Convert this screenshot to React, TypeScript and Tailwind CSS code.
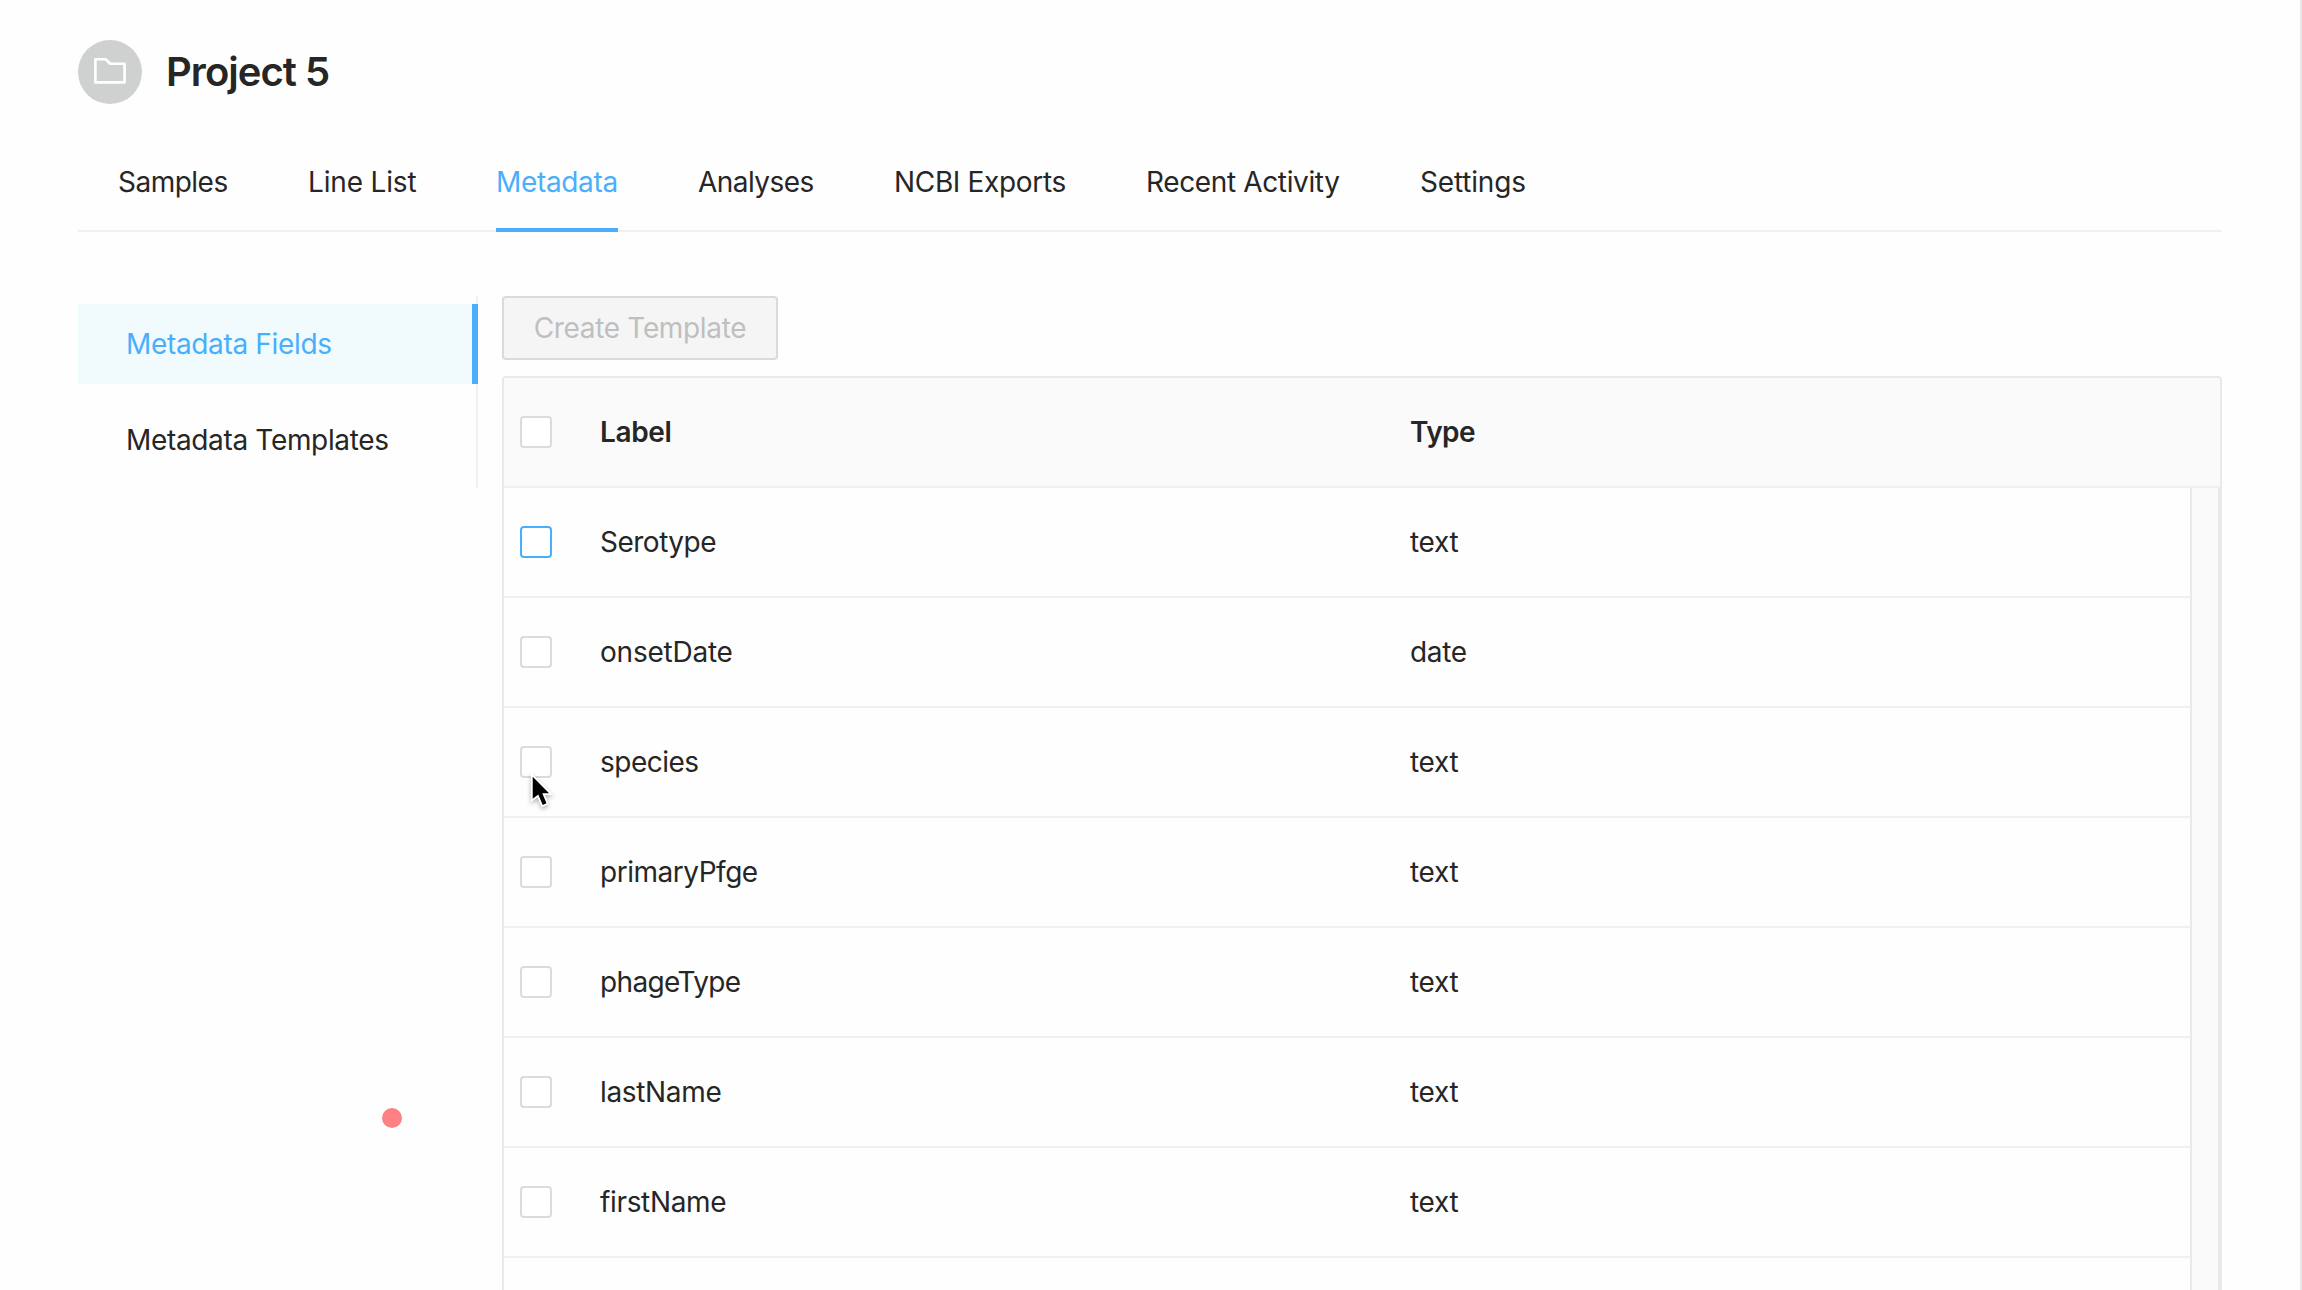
const tabs = [
  { name: "Samples", width: "w-[110px]", tracking: "tracking-[-0.018em]" },
  { name: "Line List", width: "w-[108px]", tracking: "tracking-[-0.006em]" },
  { name: "Metadata", width: "w-[122px]", tracking: "tracking-[-0.012em]", active: true },
  { name: "Analyses", width: "w-[116px]", tracking: "tracking-[-0.02em]" },
  { name: "NCBI Exports", width: "w-[172px]", tracking: "tracking-[-0.012em]" },
  { name: "Recent Activity", width: "w-[194px]", tracking: "tracking-[-0.013em]" },
  { name: "Settings", width: "w-[108px]", tracking: "tracking-[-0.006em]" },
];

const fields = [
  { label: "Serotype", type: "text", tracking: "tracking-[-0.018em]", focused: true },
  { label: "onsetDate", type: "date", tracking: "tracking-[-0.008em]" },
  { label: "species", type: "text", tracking: "tracking-[-0.018em]", pointer: true },
  { label: "primaryPfge", type: "text", tracking: "tracking-[-0.017em]" },
  { label: "phageType", type: "text", tracking: "tracking-[-0.023em]" },
  { label: "lastName", type: "text", tracking: "tracking-[-0.012em]" },
  { label: "firstName", type: "text", tracking: "tracking-[-0.012em]" },
];

function FolderIcon() {
  return (
    <svg className="mb-[3px]" width="32" height="32" viewBox="0 0 32 32" fill="none" stroke="#fff" strokeWidth="2.6" strokeLinejoin="round">
      <path d="M1.4 4.3H11.6l4.6 4.5h14.4v18.6H1.4z" />
    </svg>
  );
}

function Pointer() {
  return (
    <svg className="absolute left-[8px] top-[22px] drop-shadow-[0_2px_2px_rgba(0,0,0,0.3)]" width="24" height="38" viewBox="0 0 24 38">
      <path d="M2.7 6.7V28.7L8.3 24.6l4.4 10.3 3.8-1.6-4.2-10.1h6.8z" fill="#000" stroke="#fff" strokeWidth="3.6" paintOrder="stroke" />
    </svg>
  );
}

function Checkbox({ focused = false, pointer = false }: { focused?: boolean; pointer?: boolean }) {
  return (
    <div className={`relative ml-4 mr-12 size-8 shrink-0 rounded-[4px] border-2 bg-white ${focused ? "border-[#4aaffb]" : "border-[#dbdbdb]"}`}>
      {pointer && <Pointer />}
    </div>
  );
}

export default function App() {
  return (
    <div className="relative flex h-[1290px] w-[2302px] flex-col overflow-hidden border-r-2 border-[#e8e8e8] bg-[#fefefe] pl-[78px] font-['Inter',sans-serif] text-[28px] leading-[44px] tracking-[-0.012em] text-[#262626]">
      <header className="mt-10 flex h-16 shrink-0 items-center gap-6">
        <div className="flex size-16 items-center justify-center rounded-full bg-[#cfd1d1]">
          <FolderIcon />
        </div>
        <h1 className="text-[40px] font-semibold leading-[64px] tracking-[-0.024em]">Project 5</h1>
      </header>

      <nav className="mt-6 flex h-[104px] w-[2144px] shrink-0 gap-20 border-b-2 border-[#f0f0f0] pl-10">
        {tabs.map((t) => (
          <div
            key={t.name}
            className={`-mb-[2px] h-[104px] shrink-0 whitespace-nowrap pt-8 ${t.width} ${t.tracking} ${t.active ? "border-b-4 border-[#4aaffb] text-[#4aaffb]" : ""}`}
          >
            {t.name}
          </div>
        ))}
      </nav>

      <div className="mt-16 flex min-h-0 flex-1 items-start gap-6">
        <aside className="flex h-48 w-[400px] shrink-0 flex-col gap-4 border-r-2 border-[#f0f0f0] pt-2">
          <div className="-mr-[2px] flex h-20 items-center border-r-[6px] border-[#4aaffb] bg-[#f1fafd] pl-12 text-[#4aaffb]">Metadata Fields</div>
          <div className="flex h-20 items-center pl-12">Metadata Templates</div>
        </aside>

        <main className="flex w-[1720px] shrink-0 flex-col">
          <button className="h-16 w-[276px] rounded-[4px] border-2 border-[#dadada] bg-[#f5f5f5] text-[#bfbfbf]">Create Template</button>
          <section className="mt-4 h-[960px] overflow-hidden rounded-t-[4px] border-2 border-b-0 border-[#e9e9e9]">
            <div className="flex h-[110px] items-center border-b-2 border-[#f0f0f0] bg-[#fafafa] font-semibold">
              <Checkbox />
              <div className="w-[810px]">Label</div>
              <div className="tracking-[-0.02em]">Type</div>
            </div>
            <div className="flex h-[850px]">
              <div className="w-[1686px]">
                {fields.map((f) => (
                  <div key={f.label} className="flex h-[110px] items-center border-b-2 border-[#f0f0f0]">
                    <Checkbox focused={f.focused} pointer={f.pointer} />
                    <div className={`w-[810px] ${f.tracking}`}>{f.label}</div>
                    <div>{f.type}</div>
                  </div>
                ))}
              </div>
              <div className="w-[30px] border-x-2 border-[#e9e9e9] bg-[#fafafa]" />
            </div>
          </section>
        </main>
      </div>
      <div className="absolute left-[382px] top-[1108px] size-5 rounded-full bg-[#fd8185]" />
    </div>
  );
}
